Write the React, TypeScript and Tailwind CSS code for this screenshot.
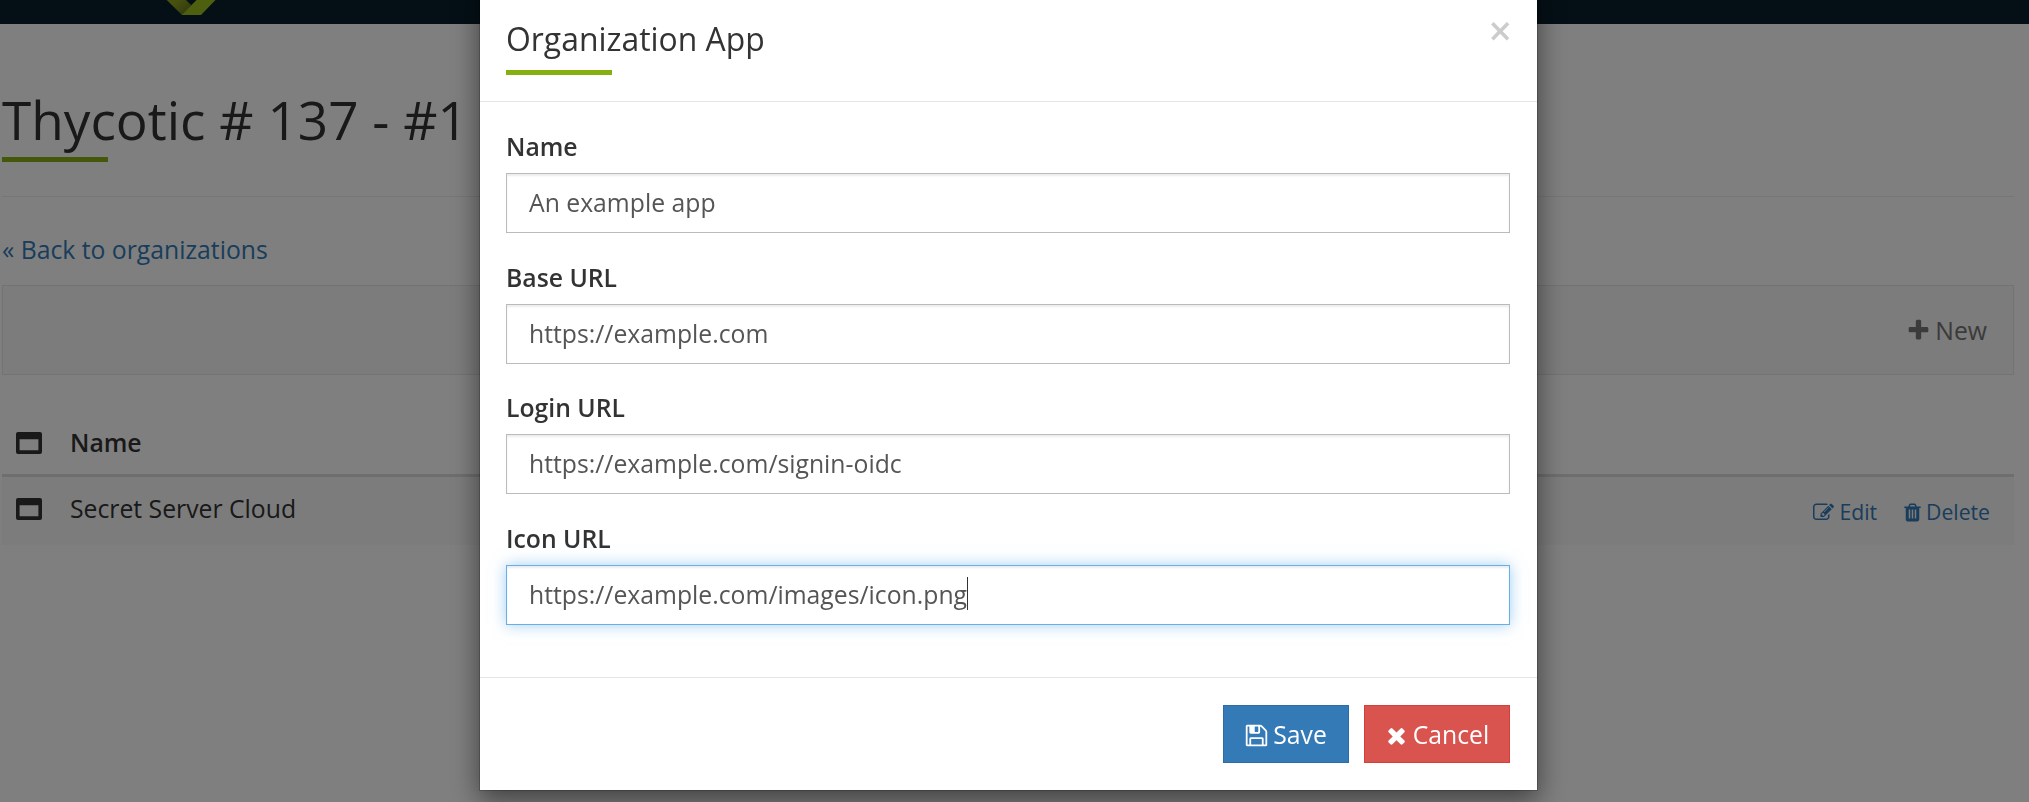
import React from "react";

const paths = {
  plus: "M1600 736v192q0 40-28 68t-68 28h-416v416q0 40-28 68t-68 28h-192q-40 0-68-28t-28-68v-416h-416q-40 0-68-28t-28-68v-192q0-40 28-68t68-28h416v-416q0-40 28-68t68-28h192q40 0 68 28t28 68v416h416q40 0 68 28t28 68z",
  times:
    "M1490 1322q0 40-28 68l-136 136q-28 28-68 28t-68-28l-294-294-294 294q-28 28-68 28t-68-28l-136-136q-28-28-28-68t28-68l294-294-294-294q-28-28-28-68t28-68l136-136q28-28 68-28t68 28l294 294 294-294q28-28 68-28t68 28l136 136q28 28 28 68t-28 68l-294 294 294 294q28 28 28 68z",
  floppy:
    "M512 1536h768v-384h-768v384zm896 0h128v-896q0-14-10-38.5t-20-34.5l-281-281q-10-10-34-20t-39-10v416q0 40-28 68t-68 28h-576q-40 0-68-28t-28-68v-416h-128v1280h128v-416q0-40 28-68t68-28h832q40 0 68 28t28 68v416zm-384-928v-320q0-13-9.5-22.5t-22.5-9.5h-192q-13 0-22.5 9.5t-9.5 22.5v320q0 13 9.5 22.5t22.5 9.5h192q13 0 22.5-9.5t9.5-22.5zm640 32v928q0 40-28 68t-68 28h-1344q-40 0-68-28t-28-68v-1344q0-40 28-68t68-28h928q40 0 88 20t76 48l280 280q28 28 48 76t20 88z",
  edit: "M888 1184l116-116-152-152-116 116v56h96v96h56zm440-720q-16-16-33 1l-350 350q-17 17-1 33t33-1l350-350q17-17 1-33zm80 594v190q0 119-84.5 203.5t-203.5 84.5h-832q-119 0-203.5-84.5t-84.5-203.5v-832q0-119 84.5-203.5t203.5-84.5h832q63 0 117 25 15 7 18 23 3 17-9 29l-49 49q-14 14-32 8-23-6-45-6h-832q-66 0-113 47t-47 113v832q0 66 47 113t113 47h832q66 0 113-47t47-113v-126q0-13 9-22l64-64q15-15 35-7t20 29zm-96-738l288 288-672 672h-288v-288zm444 132l-92 92-288-288 92-92q28-28 68-28t68 28l152 152q28 28 28 68t-28 68z",
  trash:
    "M704 1376v-704q0-14-9-23t-23-9h-64q-14 0-23 9t-9 23v704q0 14 9 23t23 9h64q14 0 23-9t9-23zm256 0v-704q0-14-9-23t-23-9h-64q-14 0-23 9t-9 23v704q0 14 9 23t23 9h64q14 0 23-9t9-23zm256 0v-704q0-14-9-23t-23-9h-64q-14 0-23 9t-9 23v704q0 14 9 23t23 9h64q14 0 23-9t9-23zm-544-992h448l-48-117q-7-9-17-11h-317q-10 2-17 11zm928 32v64q0 14-9 23t-23 9h-96v948q0 83-47 143.5t-113 60.5h-832q-66 0-113-58.5t-47-141.5v-952h-96q-14 0-23-9t-9-23v-64q0-14 9-23t23-9h309l70-167q15-37 54-63t79-26h320q40 0 79 26t54 63l70 167h309q14 0 23 9t9 23z",
};

function Icon({ name, className }: { name: keyof typeof paths; className: string }) {
  return (
    <svg viewBox="0 0 1792 1792" fill="currentColor" className={`shrink-0 ${className}`} aria-hidden>
      <path d={paths[name]} />
    </svg>
  );
}

function WindowIcon() {
  return (
    <svg viewBox="0 0 26 22" className="h-[22px] w-[26px] shrink-0" fill="currentColor" aria-hidden>
      <path fillRule="evenodd" d="M2 0H24a2 2 0 0 1 2 2V20a2 2 0 0 1-2 2H2a2 2 0 0 1-2-2V2a2 2 0 0 1 2-2ZM3.6 7.2V18.3H22.4V7.2Z" />
    </svg>
  );
}

function Logo() {
  return (
    <svg viewBox="0 0 50 16" className="ml-[166px] h-4 w-[50px]" aria-hidden>
      <defs>
        <linearGradient id="fold" x1="0" y1="0" x2="1" y2="0.6">
          <stop offset="0.3" stopColor="#90a51e" />
          <stop offset="1" stopColor="#66761c" />
        </linearGradient>
      </defs>
      <path d="M0.7 0H20L25.3 5.2 16 15Z" fill="url(#fold)" />
      <path d="M30.5 0H49.5L35 15H15.6Z" fill="#9cbe20" />
    </svg>
  );
}

const fields = [
  { label: "Name", value: "An example app" },
  { label: "Base URL", value: "https://example.com" },
  { label: "Login URL", value: "https://example.com/signin-oidc" },
  { label: "Icon URL", value: "https://example.com/images/icon.png", focused: true },
];

function Field({ label, value, focused }: { label: string; value: string; focused?: boolean }) {
  return (
    <div>
      <div className="mb-[7px] font-semibold">{label}</div>
      <div
        className={
          focused
            ? "flex h-[60px] items-center border border-[#66afe9] pl-[22px] leading-9 text-[#555] shadow-[inset_0_2px_2px_rgba(0,0,0,0.075),0_0_14px_rgba(102,175,233,0.6)]"
            : "flex h-[60px] items-center border border-[#bbb] pl-[22px] leading-9 text-[#555] shadow-[inset_0_2px_2px_rgba(0,0,0,0.075)]"
        }
      >
        {value}
        {focused && <span className="-mt-[3px] h-[33px] w-px bg-[#333]" />}
      </div>
    </div>
  );
}

function Page() {
  return (
    <div>
      <div className="h-6 bg-[#08202c]">
        <Logo />
      </div>
      <div className="ml-[2px] w-[2012px] pt-[66px]">
        <h1 className="text-[53.1px] leading-[60px]">Thycotic # 137 - #1</h1>
        <div className="mt-[7px] h-[5px] w-[106px] bg-[#86b012]" />
        <div className="mt-[34px] h-px bg-[#eee]" />
        <div className="mt-[34px] text-[#337ab7]">« Back to organizations</div>
        <div className="mt-4 flex h-[90px] items-center justify-end border border-[#e7e7e7] bg-[#f8f8f8] pt-[2px] pr-[26px] text-[#777]">
          <Icon name="plus" className="-mt-[2px] mr-[4px] size-[25px]" />
          New
        </div>
        <div className="mt-[35px] flex h-[67px] gap-[28px] border-b-[3px] border-[#ddd] pt-[14px] pl-[14px] font-semibold">
          <span className="pt-2">
            <WindowIcon />
          </span>
          Name
        </div>
        <div className="flex h-[68px] gap-[28px] bg-[#f9f9f9] pt-[13px] pl-[14px]">
          <span className="pt-2">
            <WindowIcon />
          </span>
          <span className="grow">Secret Server Cloud</span>
          <div className="flex pt-1 pr-[24px] text-[21.2px] leading-9 text-[#337ab7]">
            <Icon name="edit" className="mt-2 mr-[5px] size-[21px]" />
            Edit
            <Icon name="trash" className="mt-2 mr-[3px] ml-[25px] size-[21px]" />
            Delete
          </div>
        </div>
      </div>
    </div>
  );
}

function Modal() {
  return (
    <div className="-mt-6 ml-[479px] h-[815px] w-[1059px] border border-black/20 bg-white bg-clip-padding shadow-[0_9px_26px_rgba(0,0,0,0.5)]">
      <div className="flex h-[125px] items-start justify-between border-b border-[#e5e5e5] pr-[27px] pl-[26px] pt-11">
        <div>
          <h4 className="text-[31.9px] leading-[35px]">Organization App</h4>
          <div className="mt-[14px] h-[5px] w-[106px] bg-[#86b012]" />
        </div>
        <span className="-mt-[9px] -mr-[2px] text-[41px] font-semibold leading-[37px] text-[#ccc]">×</span>
      </div>
      <div className="flex h-[575px] flex-col gap-[25.67px] pt-[26px] pr-[27px] pl-[26px]">
        {fields.map((f) => (
          <Field key={f.label} {...f} />
        ))}
      </div>
      <div className="flex justify-end gap-[15px] border-t border-[#e5e5e5] pt-[27px] pr-[27px] text-white">
        <div className="flex h-[58px] w-[126px] items-center justify-center gap-[4px] border border-[#2e6da4] bg-[#337ab7] pt-[2px] pr-px">
          <Icon name="floppy" className="size-[25px]" />
          Save
        </div>
        <div className="flex h-[58px] w-[146px] items-center justify-center gap-[4px] border border-[#d43f3a] bg-[#d9534f] pt-[2px] pr-px">
          <Icon name="times" className="size-[25px]" />
          Cancel
        </div>
      </div>
    </div>
  );
}

export default function App() {
  return (
    <div className="h-[802px] w-[2029px] overflow-hidden bg-white font-['Open_Sans',sans-serif] text-[24.75px] leading-[38px] text-[#333]">
      <Page />
      <div className="fixed inset-0 overflow-hidden bg-black/50">
        <div className="flex">
          <Modal />
        </div>
      </div>
    </div>
  );
}
